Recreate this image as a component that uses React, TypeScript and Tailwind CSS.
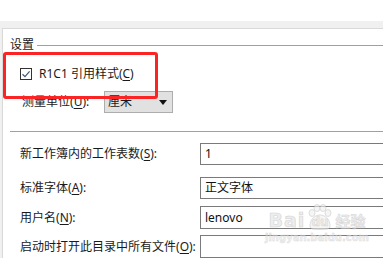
import React from 'react'

const font = { fontFamily: '"Noto Sans", "Noto Sans CJK SC", sans-serif' }

function Label({ text, key1 }: { text: string; key1: string }) {
  return (
    <span className="text-[12px] leading-[16px] text-[#1a1a1a] whitespace-nowrap">
      {text}(<span className="underline underline-offset-2">{key1}</span>):
    </span>
  )
}

function Field({ label, k, value, top, h = 'h-[22px]' }: { label: string; k: string; value: string; top: string; h?: string }) {
  return (
    <div className={`flex items-center pl-[17px] ${top}`}>
      <div className="w-[180px] shrink-0 text-[12px] leading-[16px]">
        <Label text={label} key1={k} />
      </div>
      <div className={`${h} w-[220px] shrink-0 border border-[#7a7a7a] bg-white flex items-center pl-[4px] text-[12px] leading-[16px] text-[#111]`}>
        {value}
      </div>
    </div>
  )
}

export default function App() {
  return (
    <div className="relative w-[383px] h-[258px] overflow-hidden bg-white" style={font}>
      <div className="h-[21px] bg-white" />
      <div className="h-[7px] bg-[#f0f0f0]" />
      <div className="flex h-[230px]">
        <div className="w-[2px] bg-[#f0f0f0]" />
        <div className="flex-1 min-w-0 border-l border-t border-[#d9d9d9] bg-white">

          {/* group header */}
          <div className="flex items-center mt-[8px] pl-[7px] h-[16px]">
            <span className="text-[12px] leading-[16px] text-[#1a1a1a]">设置</span>
            <div className="ml-[3px] flex-1 h-px bg-[#a0a0a0]" />
          </div>

          {/* R1C1 checkbox */}
          <div className="flex items-center mt-[13px] pl-[17px] h-[16px]">
            <div className="w-[12px] h-[12px] border border-[#333] bg-white flex items-center justify-center">
              <svg width="10" height="10" viewBox="0 0 10 10">
                <path d="M1.5 5.2 L4 7.6 L8.6 2.4" fill="none" stroke="#3d5a78" strokeWidth="1.2" />
              </svg>
            </div>
            <span className="ml-[7px] text-[12px] leading-[16px] text-[#1a1a1a] whitespace-nowrap">
              R1C1 引用样式(<span className="underline underline-offset-2">C</span>)
            </span>
          </div>

          {/* unit select */}
          <div className="flex items-center mt-[9px] pl-[19px]">
            <div className="w-[82px] shrink-0 text-[12px] leading-[16px]">
              <Label text="测量单位" key1="U" />
            </div>
            <div className="w-[69px] h-[22px] bg-[#e1e1e1] border border-[#adadad] flex items-center justify-between pl-[3px] pr-[5px]">
              <span className="text-[12px] leading-[16px] text-[#1a1a1a]">厘米</span>
              <svg width="8" height="5" viewBox="0 0 8 5">
                <path d="M0 0 H8 L4 5 Z" fill="#111" />
              </svg>
            </div>
          </div>

          <div className="mt-[18px] ml-[7px] h-px bg-[#a0a0a0]" />

          <Field label="新工作簿内的工作表数" k="S" value="1" top="mt-[11px]" />
          <Field label="标准字体" k="A" value="正文字体" top="mt-[12px]" />
          <Field label="用户名" k="N" value="lenovo" top="mt-[7px]" h="h-[23px]" />
          <Field label="启动时打开此目录中所有文件" k="O" value="" top="mt-[6px]" h="h-[23px]" />
        </div>
      </div>

      {/* annotation box */}
      <div className="absolute left-[3px] top-[52px] w-[155px] h-[47px] border-[3px] border-[#fb2424] rounded-[3px]" />

      {/* watermark */}
      <div className="absolute left-[265px] top-[204px] flex flex-col items-center opacity-60 pointer-events-none">
        <div className="flex items-end">
          <span
            className="text-[19px] leading-[20px] font-bold text-[#e2e2e2] tracking-[1px]"
            style={{ fontFamily: '"DejaVu Sans", sans-serif', WebkitTextStroke: '0.6px #b8b8b8' }}
          >
            Bai
          </span>
          <div className="relative w-[28px] h-[26px] mx-[1px]">
            <svg width="28" height="26" viewBox="0 0 28 26" className="absolute inset-0">
              <g fill="#efefef" stroke="#bdbdbd" strokeWidth="0.8">
                <ellipse cx="6" cy="9" rx="3" ry="3.5" />
                <ellipse cx="11" cy="4" rx="3" ry="3.5" />
                <ellipse cx="17" cy="4" rx="3" ry="3.5" />
                <ellipse cx="22" cy="9" rx="3" ry="3.5" />
                <path d="M4 22 C4 15 9 11 14 11 C19 11 24 15 24 22 C24 25 21 25.5 14 25.5 C7 25.5 4 25 4 22 Z" />
              </g>
            </svg>
            <span
              className="absolute left-[5px] top-[11px] text-[12px] leading-[14px] font-bold text-[#e0e0e0]"
              style={{ fontFamily: '"DejaVu Sans", sans-serif', WebkitTextStroke: '0.5px #b8b8b8' }}
            >
              du
            </span>
          </div>
          <span
            className="text-[15px] leading-[18px] font-bold text-[#e2e2e2]"
            style={{ fontFamily: '"Noto Sans CJK SC", sans-serif', WebkitTextStroke: '0.5px #b8b8b8' }}
          >
            经验
          </span>
        </div>
        <span
          className="mt-[2px] text-[10px] leading-[11px] font-bold text-[#e6e6e6]"
          style={{ fontFamily: '"DejaVu Sans", sans-serif', WebkitTextStroke: '0.4px #c4c4c4' }}
        >
          jingyan.baidu.com
        </span>
      </div>
    </div>
  )
}
